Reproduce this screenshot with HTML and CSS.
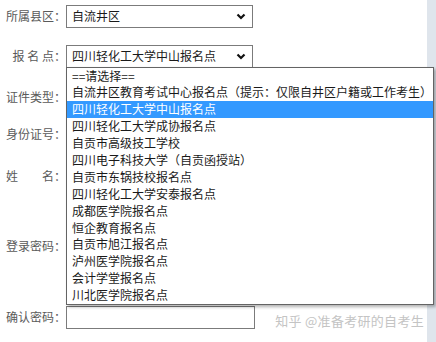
FILE: index.html
```html
<!DOCTYPE html>
<html lang="zh-CN">
<head>
    <meta charset="UTF-8">
    <title>报名信息</title>
    <link rel="stylesheet" href="styles.css">
</head>
<body>
<div class="page">
    <div class="form">
        <div class="row">
            <label class="label">所属县区：</label>
            <div class="select">
                <span>自流井区</span>
                <svg class="chev" width="10" height="7" viewBox="0 0 10 7"><polyline points="1.5,1.5 5,5 8.5,1.5" fill="none" stroke="#111" stroke-width="2.2"/></svg>
            </div>
        </div>

        <div class="row">
            <label class="label">报 名 点：</label>
            <div class="select open">
                <span>四川轻化工大学中山报名点</span>
                <svg class="chev" width="10" height="7" viewBox="0 0 10 7"><polyline points="1.5,1.5 5,5 8.5,1.5" fill="none" stroke="#111" stroke-width="2.2"/></svg>

                <!-- opened list of the select -->
                <ul class="options">
                    <li>==请选择==</li>
                    <li>自流井区教育考试中心报名点（提示：仅限自井区户籍或工作考生）</li>
                    <li class="active">四川轻化工大学中山报名点</li>
                    <li>四川轻化工大学成协报名点</li>
                    <li>自贡市高级技工学校</li>
                    <li>四川电子科技大学（自贡函授站）</li>
                    <li>自贡市东锅技校报名点</li>
                    <li>四川轻化工大学安泰报名点</li>
                    <li>成都医学院报名点</li>
                    <li>恒企教育报名点</li>
                    <li>自贡市旭江报名点</li>
                    <li>泸州医学院报名点</li>
                    <li>会计学堂报名点</li>
                    <li>川北医学院报名点</li>
                </ul>
            </div>
        </div>

        <div class="row">
            <label class="label">证件类型：</label>
            <div class="select"></div>
        </div>

        <div class="row">
            <label class="label">身份证号：</label>
            <input class="input" type="text">
        </div>

        <div class="row">
            <label class="label">姓&emsp;&emsp;名：</label>
            <input class="input" type="text">
        </div>

        <div class="row">
            <label class="label">登录密码：</label>
            <input class="input" type="password">
        </div>

        <div class="row">
            <label class="label">确认密码：</label>
            <input class="input" type="password">
        </div>
    </div>

    <div class="watermark">知乎 @准备考研的自考生</div>
</div>
<div class="strip"></div>
</body>
</html>
```

FILE: styles.css
```css
html, body {
    margin: 0;
    height: 100%;
}

body {
    display: flex;
    background-color: #fff;
    font-family: "Noto Sans CJK SC", "Liberation Sans", sans-serif;
    font-size: 12px;
    color: #222;
    overflow: hidden;
}

.page {
    flex: 1;
    position: relative;
}

.strip {
    width: 9px;
    background-color: #dfe5ec;
}

.form {
    display: grid;
    grid-template-rows: 40px 41px 37px 42px 70px 71px 24px;
    padding-top: 4px;
}

.row {
    display: flex;
    align-items: center;
    height: 24px;
}

.label {
    width: 66px;
    text-align: right;
    color: #5a5a5a;
    line-height: 16px;
    white-space: nowrap;
}

.select {
    position: relative;
    box-sizing: border-box;
    width: 187px;
    height: 23px;
    border: 1px solid #7b7b7b;
    display: flex;
    align-items: center;
    justify-content: space-between;
    padding: 0 5px 0 5px;
    line-height: 16px;
    color: #1a1a1a;
}

.chev {
    margin-right: 1px;
}

.input {
    box-sizing: border-box;
    width: 189px;
    height: 23px;
    border: 1px solid #7b7b7b;
    margin: 0;
    padding: 0 5px;
    font: inherit;
}

.options {
    position: absolute;
    top: 21px;
    left: -1px;
    z-index: 2;
    width: 368px;
    box-sizing: border-box;
    margin: 0;
    padding: 0;
    list-style: none;
    background-color: #fff;
    border: 1px solid #646464;
    box-shadow: 2px 2px 3px rgba(0, 0, 0, 0.3);
}

.options li {
    height: 16.9px;
    line-height: 16.9px;
    padding-left: 5px;
    white-space: nowrap;
    color: #1a1a1a;
}

.options li.active {
    background-color: #3399ff;
    color: #fff;
}

.watermark {
    position: absolute;
    right: 3px;
    bottom: 12px;
    z-index: 3;
    font-size: 13px;
    color: #c4c4c4;
    text-shadow: 0 0 2px #fff, 0 0 1px #fff;
    letter-spacing: 0.3px;
}
```
